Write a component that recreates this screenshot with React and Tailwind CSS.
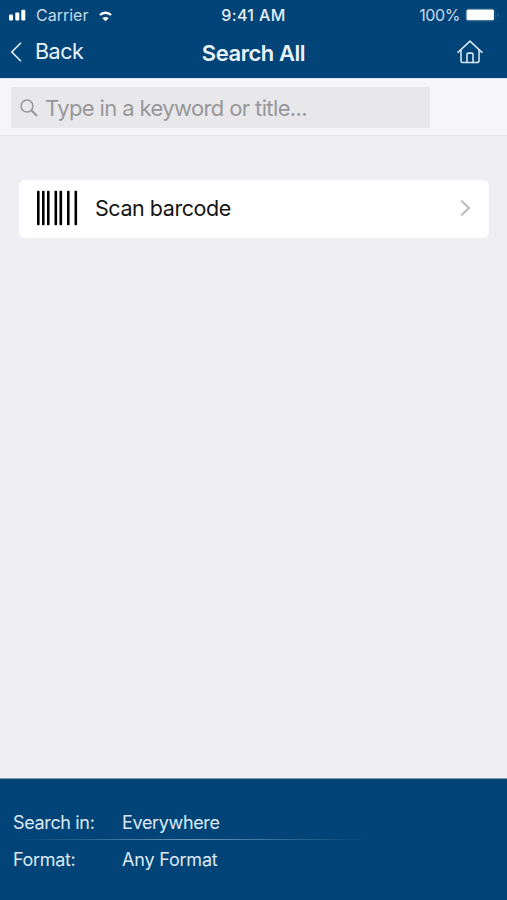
import React from "react";

const BARS = [37, 42, 47, 54.5, 59.5, 67, 74.5];

function StatusBar() {
  return (
    <div className="grid grid-cols-3 h-[30px] items-center text-[16px] leading-none text-[#c9d9e8]">
      <div className="flex items-center pl-[9px]">
        <svg width="17" height="12" viewBox="0 0 17 12" fill="#fff" className="shrink-0">
          <rect x="0" y="5.5" width="4" height="6" rx="1" />
          <rect x="6.3" y="3.5" width="4" height="8" rx="1" />
          <rect x="12.3" y="0.7" width="4" height="10.8" rx="1" />
        </svg>
        <span className="ml-[10px]">Carrier</span>
        <svg width="13" height="11" viewBox="0 0 13 11" fill="none" className="ml-[11px] mt-[3px] shrink-0">
          <path d="M1 4C4 .9 9 .9 12 4" stroke="#fff" strokeWidth="2.5" />
          <path d="M6.5 10.2 3.3 7.3c1.9-1.7 4.5-1.7 6.4 0z" fill="#fff" />
        </svg>
      </div>
      <div className="text-center font-medium tracking-[0.4px] text-[#e6eef6]">9:41 AM</div>
      <div className="flex items-center justify-end pr-[8px]">
        <span className="tracking-[-0.4px]">100%</span>
        <svg width="34" height="14" viewBox="0 0 34 14" className="ml-[5px] shrink-0">
          <rect x="0.5" y="0.5" width="30" height="13" rx="3" fill="none" stroke="#17547f" />
          <rect x="1.5" y="1.6" width="27.5" height="10.6" rx="1.5" fill="#fff" />
          <path d="M32 5v4c2-.8 2-3.2 0-4z" fill="#2b628b" />
        </svg>
      </div>
    </div>
  );
}

function NavBar() {
  return (
    <div className="grid grid-cols-3 h-12 items-center leading-none text-[#e9f3fb]">
      <div className="flex items-center pl-[10px] -mt-[4px]">
        <svg width="12" height="20" viewBox="0 0 12 20" fill="none" stroke="currentColor" strokeWidth="1.5">
          <path d="M11 .8 1.8 10 11 19.2" />
        </svg>
        <span className="ml-[13px] text-[21.5px] tracking-[-0.5px]">Back</span>
      </div>
      <h1 className="text-center text-[22px] font-semibold tracking-[-0.45px] whitespace-nowrap -mt-[2px]">
        Search All
      </h1>
      <div className="flex justify-end pr-6 -mt-[4px]">
        <svg
          width="26"
          height="24"
          viewBox="0 0 26 24"
          fill="none"
          stroke="#d4e4f1"
          strokeWidth="1.6"
          strokeLinecap="round"
          strokeLinejoin="round"
        >
          <path d="M1 12.3 13 1.2l12 11.1" />
          <path d="M4 9.8v10.6c0 1.3.8 2.1 2.1 2.1h13.8c1.3 0 2.1-.8 2.1-2.1V9.8" />
          <path d="M10 22.5v-8.3c0-.7.4-1.1 1.1-1.1h3.8c.7 0 1.1.4 1.1 1.1v8.3" />
        </svg>
      </div>
    </div>
  );
}

function SearchBar() {
  return (
    <div className="h-[58px] bg-[#f6f6f8] border-t border-b border-t-[#d8e8f2] border-b-[#e3e3e7] pt-[8px] pl-[11px]">
      <div className="flex items-center w-[419px] h-[41px] bg-[#e8e8ea] pl-[9px] text-[#97979a]">
        <svg width="18" height="18" viewBox="0 0 18 18" fill="none" stroke="currentColor" strokeWidth="1.5">
          <circle cx="7" cy="7" r="5.9" />
          <path d="m11.3 11.3 5.7 5.7" strokeWidth="2" />
        </svg>
        <span className="ml-[7px] text-[22px] leading-none tracking-[-0.62px] whitespace-nowrap">
          Type in a keyword or title...
        </span>
      </div>
    </div>
  );
}

function ScanRow() {
  return (
    <button className="flex items-center w-[470px] h-[58px] ml-[19px] mt-[43.5px] rounded-md bg-white text-left text-[#151515]">
      <svg width="41" height="36" viewBox="37 0 41 36" className="ml-[18px] -mt-[1px] shrink-0">
        {BARS.map((x) => (
          <rect key={x} x={x} y="0.8" width="2.6" height="34.4" rx="0.8" fill="#000" />
        ))}
      </svg>
      <span className="ml-[17px] text-[21.5px] leading-none tracking-[-0.45px]">Scan barcode</span>
      <svg
        width="11"
        height="18"
        viewBox="0 0 11 18"
        fill="none"
        stroke="#c2c2c4"
        strokeWidth="2.4"
        className="ml-auto mr-[18px] -mt-[2px]"
      >
        <path d="m1.2 1.5 7.6 7.5-7.6 7.5" />
      </svg>
    </button>
  );
}

function Footer() {
  return (
    <div className="h-[122px] mt-auto bg-[#024477] border-t border-[#8299b0] text-[18px] leading-none tracking-[-0.35px] text-[#dce9f5]">
      <div className="flex items-center h-[60px] pt-[28px] pl-[13px]">
        <span className="w-[109px]">Search in:</span>
        <span>Everywhere</span>
      </div>
      <div className="h-px ml-[14px] w-[354px] bg-linear-to-r from-transparent via-[#6c95b4] to-transparent" />
      <div className="flex items-center h-[40px] pl-[13px]">
        <span className="w-[109px]">Format:</span>
        <span className="tracking-[-0.2px]">Any Format</span>
      </div>
    </div>
  );
}

export default function App() {
  return (
    <div className="flex flex-col w-[507px] h-[900px] overflow-hidden bg-[#eeeef3] font-['Inter',sans-serif]">
      <header className="bg-[#024477]">
        <StatusBar />
        <NavBar />
      </header>
      <SearchBar />
      <ScanRow />
      <Footer />
    </div>
  );
}
